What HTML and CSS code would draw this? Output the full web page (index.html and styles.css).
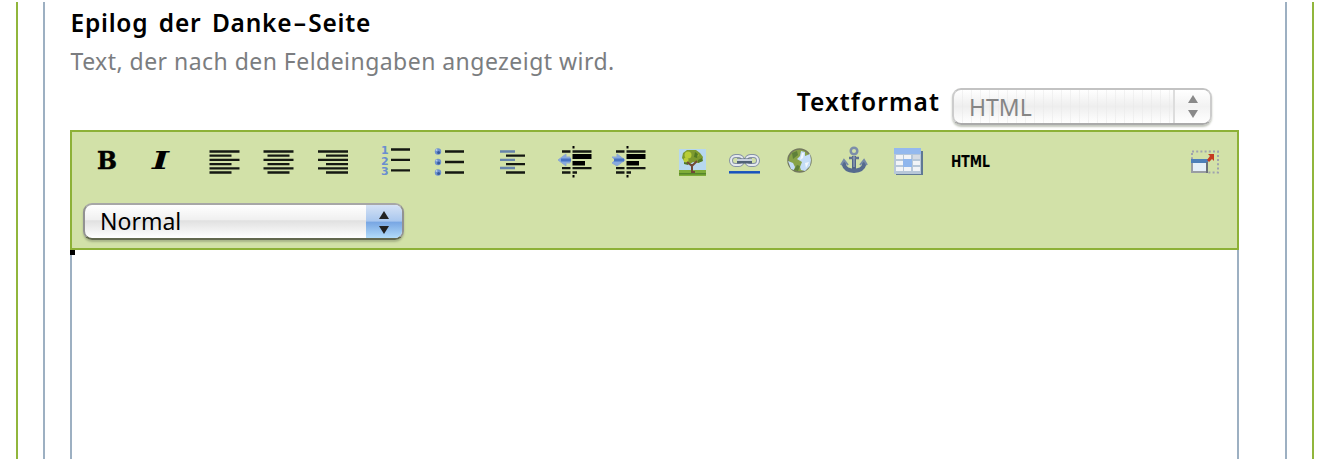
FILE: index.html
```html
<!DOCTYPE html>
<html lang="de">
<head>
<meta charset="utf-8">
<title>Epilog der Danke-Seite</title>
<link rel="stylesheet" href="styles.css">
</head>
<body>
<div class="outer"><div class="inner">
<h1 class="title"><span>Epilog</span><span>der</span><span>Danke<i class="dash">–</i>Seite</span></h1>
<p class="help">Text, der nach den Feldeingaben angezeigt wird.</p>
<div class="format"><span class="label">Textformat</span>
<div class="select disabled"><span class="value">HTML</span><span class="arrows"><svg width="12" height="24"><path d="M6 0l5 8H1zM6 23l5-8H1z"/></svg></span></div></div>
<div class="editor">
<div class="toolbar">
<div class="icons">
<div class="group">
<svg viewBox="-27 -20 54 40"><text class="serif" x="-10" y="8" textLength="20" lengthAdjust="spacingAndGlyphs">B</text></svg>
<svg viewBox="-27 -20 54 40"><text class="serif italic" x="-9" y="8" textLength="17" lengthAdjust="spacingAndGlyphs">I</text></svg>
</div>
<div class="group">
<svg viewBox="-27 -20 54 40"><path class="line" d="M-14.500-9.500h30M-14.500-5.300h22M-14.500-1.100h30M-14.500 3.100h22M-14.500 7.300h30M-14.500 11.500h22"/></svg>
<svg viewBox="-27 -20 54 40"><path class="line" d="M-14.500-9.500h30M-10.500-5.300h22M-14.500-1.100h30M-10.500 3.100h22M-14.500 7.300h30M-10.500 11.500h22"/></svg>
<svg viewBox="-27 -20 54 40"><path class="line" d="M-14-9.500h30M-6-5.300h22M-14-1.100h30M-6 3.100h22M-14 7.300h30M-6 11.500h22"/></svg>
</div>
<div class="group">
<svg viewBox="-27 -20 54 40"><g class="digits"><text x="-14" y="-7.500">1</text><text x="-14" y="3.500">2</text><text x="-14" y="14">3</text></g><path class="line" d="M-4-11.500h19M-4-1.200h19M-4 9.300h19"/></svg>
<svg viewBox="-27 -20 54 40"><g fill="#6e92ce"><circle cx="-11" cy="-9.500" r="3.200"/><circle cx="-11" cy="1" r="3.200"/><circle cx="-11" cy="11.500" r="3.200"/></g><g fill="#385a9c"><circle cx="-10.400" cy="-8.500" r="1.500"/><circle cx="-10.400" cy="2" r="1.500"/><circle cx="-10.400" cy="12.500" r="1.500"/></g><g fill="#b9cce8"><circle cx="-12.500" cy="-11" r="1"/><circle cx="-12.500" cy="-.5" r="1"/><circle cx="-12.500" cy="10" r="1"/></g><path class="line" d="M-4-9.500h19M-4 1h19M-4 11.500h19"/></svg>
</div>
<div class="group">
<svg viewBox="-27 -20 54 40"><path class="line blue" d="M-12-9.500h15M-12-1.200h15M-12 7h15"/><path class="line" d="M-6-5.300h19M-6 3.100h19M-6 11.500h19"/></svg>
</div>
<div class="group">
<svg viewBox="-27 -20 54 40"><path d="M-2.500-15h2v2.500h-2zM-2.500 14h2v2.500h-2zM-2.500-7h19v5h-19zM-2.500 0h12.500v4.500h-12.500z"/><path class="line" d="M-13-9.500h8.500M-2.500-9.500h19M-13 7.200h8.500M-2.500 7.200h19M-13 11.500h8.500M-2.500 11.500h4.500"/><path class="arrow" d="M-17-1l8-6v3h4v6h-4v3z"/><path d="M-14-1h10" stroke="#4572c4" stroke-width="3"/></svg>
<svg viewBox="-27 -20 54 40"><path d="M-2.500-15h2v2.500h-2zM-2.500 14h2v2.500h-2zM-2.500-7h19v5h-19zM-2.500 0h12.500v4.500h-12.500z"/><path class="line" d="M-13-9.500h8.500M-2.500-9.500h19M-13 7.200h8.500M-2.500 7.200h19M-13 11.500h8.500M-2.500 11.500h4.500"/><path class="arrow" d="M-4-1l-8-6v3h-5l3 3-3 3 5 3z"/><path d="M-15-1h10" stroke="#4572c4" stroke-width="3"/></svg>
</div>
<div class="group">
<svg viewBox="-27 -20 54 40"><path fill="#b7d8ef" d="M-13-12h27v22h-27z"/><path fill="#7fac39" d="M-13 9h27v6h-27z"/><path fill="#55852b" d="M-13 12h27v1.500h-27z"/><path fill="#7d9a2f" d="M-9-8l4-3h9l4 3 3 4-1 4-4 2-5-1-3 2-5-2-3-4z"/><g fill="#b9cd38"><circle cx="-4" cy="-6" r="3.500"/><circle cx="-6" cy="-1" r="2.500"/><circle cx="5" cy="-6" r="1.500"/></g><path fill="#527923" d="M3-9l3 2-1 4-3-1zM6-1l4-2 1 3-5 2zM-8 1l5 1-1 2-4-1z"/><path fill="none" stroke="#714a37" stroke-width="2" d="M-5 1l5 4 5-5M0 3v8l3 0"/></svg>
<svg viewBox="-27 -20 54 40"><g fill="none"><rect x="-15" y="-5" width="12" height="9" rx="4.500" stroke="#8692a5" stroke-width="4"/><rect x="0" y="-5" width="12" height="9" rx="4.500" stroke="#8692a5" stroke-width="4"/><rect x="-15" y="-5" width="12" height="9" rx="4.500" stroke="#e5e9ef" stroke-width="2"/><rect x="0" y="-5" width="12" height="9" rx="4.500" stroke="#e5e9ef" stroke-width="2"/><path d="M-9 0H6" stroke="#506176" stroke-width="5"/><path d="M-9-1H6" stroke="#c9d2df" stroke-width="2"/><path d="M-17 11.300h31" stroke="#1752bd" stroke-width="2.500"/></g></svg>
<svg viewBox="-27 -20 54 40"><circle cx="-.5" cy="-.5" r="11.500" fill="#88a348" stroke="#74795f" stroke-width="1.500"/><path fill="#c5ddf7" d="M1-10l4 1 0 4 5-2 1 6-1 6-5 5-4-1-1-3 2-5-5-3 3-3zM-12 0l5 2 2 4-1 3-3-1z"/><path fill="#f1f7fc" d="M2-8l2 0-1 5-3 2zM5 2l4-1-3 6z"/><path fill="#5f803a" d="M-8-8l5-2 1 4-5 4zM-3 4l3 1-2 5-4-1z"/></svg>
<svg viewBox="-27 -20 54 40"><g fill="none"><path d="M0-5V10" stroke="#506486" stroke-width="4"/><circle cx="0" cy="-10" r="3.300" stroke="#7c8eaa" stroke-width="2.500"/><path d="M-5-3H5" stroke="#61738f" stroke-width="2.500"/><path d="M-10 1v3q1 5 10 6q9-1 10-6V1" stroke="#566b8e" stroke-width="4"/><path d="M-13 4l3-5 4 5M6 4l4-5 3 5" stroke="#768aa6" stroke-width="2"/><path d="M0-5V6" stroke="#a8b5c8"/></g></svg>
<svg viewBox="-27 -20 54 40"><path fill="#5f7894" d="M-12-10h27v24h-27z"/><path fill="#b7c7d8" d="M-14-13h27v26h-27z"/><path fill="#94b9ee" d="M-14-13h27v6h-27z"/><path fill="#f2f4f7" d="M-12-6h7v4h-7zM-4-6h7v4h-7zM-12 0h7v4h-7zM5 0h7v4H5zM-12 6h7v4h-7zM-4 6h7v4h-7zM5 6h7v4H5z"/><path fill="#d5dbe4" d="M5-6h7v4H5z"/><path fill="#8fb6ed" d="M-5-2h9v8h-9z"/></svg>
</div>
<div class="group"><svg viewBox="-27 -20 54 40"><text class="source" x="-20" y="6" textLength="39" lengthAdjust="spacingAndGlyphs">HTML</text></svg></div>
<svg class="maximize" viewBox="-14 -20 29 40"><path fill="none" stroke="#9fa3ae" stroke-width="2" stroke-dasharray="2 2.200" d="M-13-9.500h26v21H2M-13-8v6"/><path fill="#999da3" d="M-14-2H3v14h-17z"/><path fill="#e5eff9" d="M-12 2H1v8h-13z"/><path fill="#4d7fb9" d="M-14-2H3v4h-17z"/><path fill="#6a7079" d="M1 1h2v11H1z"/><path fill="#c53a20" d="M3-7h6v7L7-2 4 1 2-1l3-4z"/></svg>
</div>
<div class="select style"><span class="value">Normal</span><span class="arrows"><svg width="12" height="24"><path d="M6 0l5 8H1zM6 23l5-8H1z"/></svg></span></div>
</div>
<div class="content"><span class="corner"></span></div>
</div>
</div></div>
</body>
</html>
```
FILE: styles.css
```css
* { box-sizing: border-box; }
body { margin: 0; padding: 2px 15px 0 16px; height: 459px; overflow: hidden; background: #fff; font-family: "Noto Sans", "Open Sans", sans-serif; }
.outer { height: 457px; border: solid #91b63c; border-width: 0 2px; padding: 0 25px; }
.inner { height: 457px; border: solid #9db0c2; border-width: 0 2px; padding: 0 46px 0 25px; display: flex; flex-direction: column; }
.title { margin: 0; height: 42px; font-size: 24.5px; line-height: 42px; font-weight: 600; letter-spacing: .75px; display: flex; gap: 10.5px; white-space: nowrap; }
.dash { font-style: normal; margin: 0 1.5px; }
.help { margin: 0; height: 36px; line-height: 35px; font-size: 23px; letter-spacing: .46px; color: #7b7d80; white-space: nowrap; }
.title, .help { padding-left: .5px; }
.format { height: 50px; padding: 8px 27px 0 0; display: flex; justify-content: flex-end; gap: 12px; }
.label { font-size: 24.5px; line-height: 28px; font-weight: 600; letter-spacing: 1.1px; }
.select { display: flex; height: 37px; border: 2px solid #999; border-radius: 9px; overflow: hidden; background: linear-gradient(#fff, #f0f0f0 44%, #e1e1e1 48%, #fff); box-shadow: 0 2px 2px #6a725966; }
.value { flex: 1; padding-left: 15px; font-size: 23px; line-height: 34px; }
.arrows { width: 37px; display: flex; align-items: center; justify-content: center; }
.disabled { width: 260px; border-color: #c3c3c3 #ccc #aaa; color: #858585; background: repeating-linear-gradient(90deg, transparent 0 8px, #e8e8e880 8px 9px), linear-gradient(#fff, #eee 50%, #fff); }
.disabled .arrows { border-left: 2px solid #ddd; background: linear-gradient(#fff, #f2f2f2 50%, #fff); }
.disabled svg { fill: #898989; }
.editor { flex: 1; display: flex; flex-direction: column; }
.toolbar { height: 120px; border: 2px solid #8db137; background: #d2e1a8; padding: 9px 17px 0 8px; }
.icons { display: flex; height: 40px; }
.group { display: flex; margin-right: 9px; }
.group svg { width: 54px; height: 40px; }
.maximize { width: 29px; height: 40px; margin-left: auto; }
.line { fill: none; stroke: #151812; stroke-width: 2.3; }
.blue { stroke: #6683aa; }
.arrow { fill: #86a9df; stroke: #8fa9d1; }
.serif { font: bold 25px "DejaVu Serif", serif; stroke: #000; stroke-width: .5px; }
.italic { font-style: italic; stroke: none; }
.digits { font: bold 11px "DejaVu Sans", sans-serif; fill: #698ecf; }
.source { font: bold 15px "DejaVu Sans", sans-serif; }
.style { width: 321px; margin: 22px 0 0 3px; border-color: #a7a7a7 #929292 #62684f; }
.style .value { line-height: 33px; }
.style .arrows { margin: -2px; height: 37px; width: 38px; border: solid #5275bc; border-width: 2px 2px 0 0; background: linear-gradient(#d5e2f5, #a9c7ee 46%, #78a6e3 49%, #b9e2fc); }
.style svg { fill: #222; }
.content { flex: 1; border: solid #9db0c2; border-width: 0 2px; }
.corner { display: block; width: 5px; height: 5px; margin-left: -2px; background: #000; }
```
